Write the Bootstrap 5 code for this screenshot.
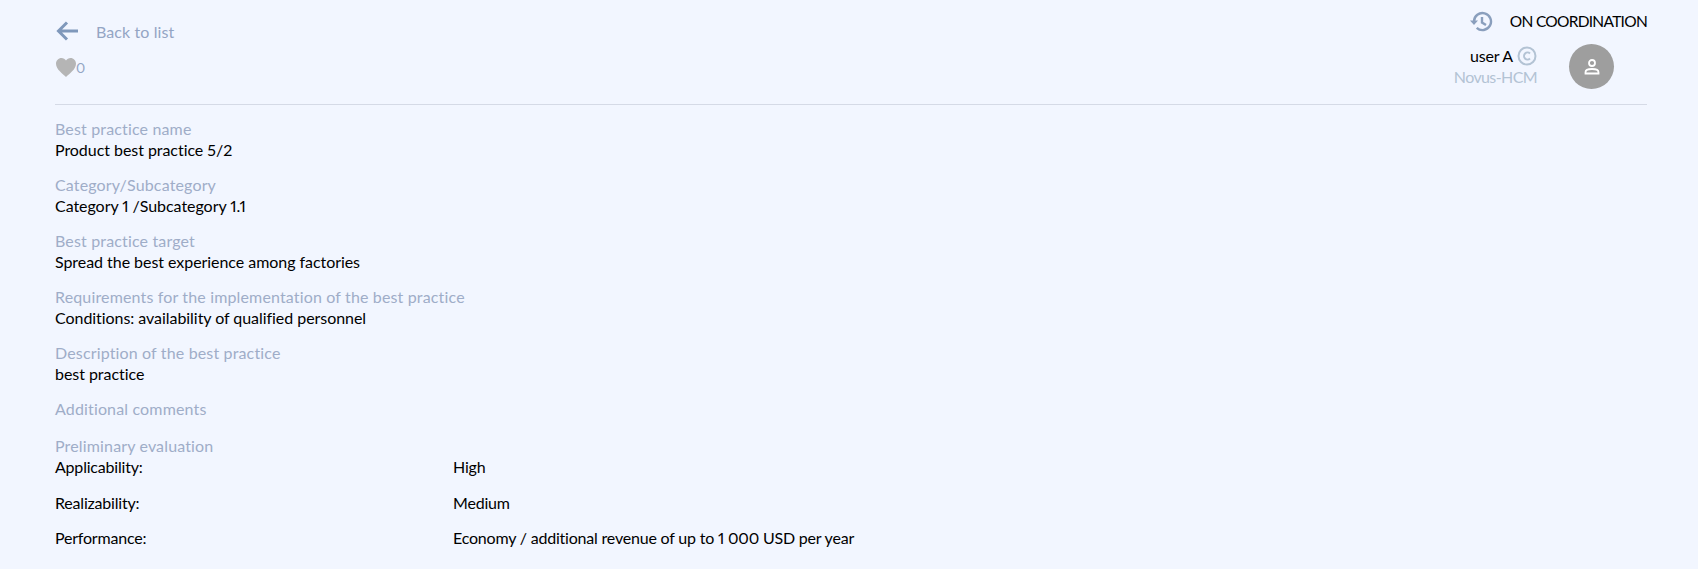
<!DOCTYPE html>
<html lang="en">
<head>
    <title>Best practice</title>
    <meta charset="utf-8">
    <meta name="viewport" content="width=device-width, initial-scale=1">
    <link href="https://cdn.jsdelivr.net/npm/bootstrap@5.3.3/dist/css/bootstrap.min.css" rel="stylesheet">
    <script src="https://cdn.jsdelivr.net/npm/bootstrap@5.3.3/dist/js/bootstrap.bundle.min.js"></script>
    <style>
        body {
            background: #f2f6ff;
            color: #000;
            font-family: Lato, "Liberation Sans", sans-serif;
            font-size: 16px;
            line-height: 21px;
            letter-spacing: -.05px;
            font-variant-numeric: proportional-nums;
        }
        .page-wrap { padding: 0 51px 0 55px; }
        .top-bar { height: 105px; border-bottom: 1px solid #d5dae6; }
        .back-link { color: #94a5c4; text-decoration: none; padding-top: 19px; letter-spacing: .1px; }
        .back-arrow { margin-right: 17px; }
        .like-count { color: #94a5c4; font-size: 14px; line-height: 18px; padding-top: 2px; }
        .like-row { margin-top: 14px; margin-left: 1px; }
        .status-row { padding-top: 9px; gap: 17px; }
        .status-text { letter-spacing: -.72px; font-size: 15.500px; }
        .user-row { margin-top: 11px; padding-right: 33px; gap: 32px; }
        .user-name { line-height: 21px; letter-spacing: -.2px; }
        .user-org { color: #b3c3d4; line-height: 22px; letter-spacing: -.6px; }
        .avatar-circle { width: 45px; height: 45px; background: #9e9e9e; border-radius: 50%; }
        .info-block { margin-bottom: 14px; }
        .info-label { color: #9fadc8; letter-spacing: .15px; }
        .info-empty { margin-bottom: 16px; }
        .eval-row { margin-bottom: 14.500px; letter-spacing: -.2px; }
        .content-area { padding-top: 13px; }
    </style>
</head>
<body>
<div class="page-wrap">
    <div class="top-bar d-flex justify-content-between">
        <div>
            <a class="back-link d-flex align-items-center" href="#">
                <svg width="24" height="24" viewBox="0 0 24 24" fill="none" stroke="#7f98bb" stroke-width="3" class="back-arrow"><path d="M23 12H4M12 3.500 3.500 12l8.500 8.500"/></svg>
                Back to list
            </a>
            <div class="like-row d-flex align-items-center">
                <svg width="20" height="19" viewBox="0 0 20 19"><path fill="#b5b5b5" d="M10 19C7 16 0 11.500 0 5.800 0 2.500 2.500 0 5.500 0 7.300 0 9 .9 10 2.400 11 .9 12.700 0 14.500 0 17.500 0 20 2.500 20 5.800 20 11.500 13 16 10 19z"/></svg>
                <span class="like-count">0</span>
            </div>
        </div>
        <div class="d-flex flex-column align-items-end">
            <div class="status-row d-flex align-items-center">
                <svg width="24" height="24" viewBox="0 0 24 24" fill="none" stroke="#8a9fbd" stroke-width="2.400"><path d="M5 12.500a8.500 8.500 0 1 1 2.700 6.300"/><path fill="#8a9fbd" stroke="none" d="M1 11.500h8l-4 4.500z"/><path d="M13 8v5.500l4 2.500"/></svg>
                <span class="status-text">ON COORDINATION</span>
            </div>
            <div class="user-row d-flex align-items-center">
                <div class="text-end">
                    <div class="user-name d-flex align-items-center justify-content-end">user A
                        <svg class="ms-1" width="20" height="20" viewBox="0 0 20 20" fill="none" stroke="#b3c3d4" stroke-width="2"><circle cx="10" cy="10" r="8.500"/><path d="M13 7.500a3.500 3.500 0 1 0 0 5"/></svg>
                    </div>
                    <div class="user-org">Novus-HCM</div>
                </div>
                <div class="avatar-circle d-flex align-items-center justify-content-center">
                    <svg width="18" height="18" viewBox="0 0 18 18" fill="none" stroke="#fff" stroke-width="1.800"><circle cx="9" cy="5" r="3"/><path d="M2.500 15.500v-1.200c0-2 3-3.300 6.500-3.300s6.500 1.300 6.500 3.300v1.200z"/></svg>
                </div>
            </div>
        </div>
    </div>

    <div class="content-area">
        <div class="info-block">
            <div class="info-label">Best practice name</div>
            <div>Product best practice 5/2</div>
        </div>
        <div class="info-block">
            <div class="info-label">Category/Subcategory</div>
            <div>Category 1 /Subcategory 1.1</div>
        </div>
        <div class="info-block">
            <div class="info-label">Best practice target</div>
            <div>Spread the best experience among factories</div>
        </div>
        <div class="info-block">
            <div class="info-label">Requirements for the implementation of the best practice</div>
            <div>Conditions: availability of qualified personnel</div>
        </div>
        <div class="info-block">
            <div class="info-label">Description of the best practice</div>
            <div>best practice</div>
        </div>
        <div class="info-block info-empty">
            <div class="info-label">Additional comments</div>
        </div>
        <div class="info-label">Preliminary evaluation</div>
        <div class="row g-0 eval-row">
            <div class="col-3">Applicability:</div>
            <div class="col-9">High</div>
        </div>
        <div class="row g-0 eval-row">
            <div class="col-3">Realizability:</div>
            <div class="col-9">Medium</div>
        </div>
        <div class="row g-0 eval-row">
            <div class="col-3">Performance:</div>
            <div class="col-9">Economy / additional revenue of up to 1 000 USD per year</div>
        </div>
    </div>
</div>
</body>
</html>
